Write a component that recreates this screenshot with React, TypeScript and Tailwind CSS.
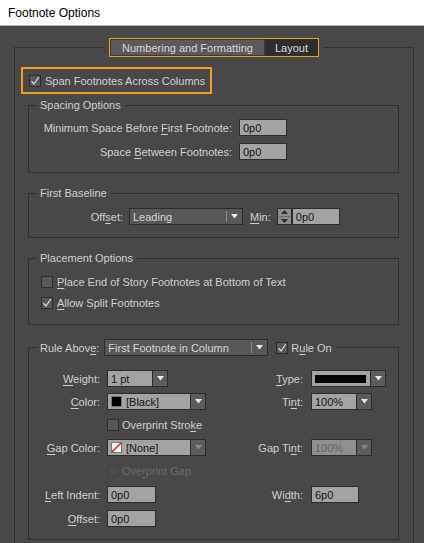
import type { ReactNode } from 'react';

function U({ children }: { children: ReactNode }) {
  return <span className="underline underline-offset-2">{children}</span>;
}

function Check({ checked, disabled }: { checked?: boolean; disabled?: boolean }) {
  return (
    <span
      className={`flex h-[12px] w-[12px] shrink-0 items-center justify-center border ${
        disabled ? 'border-[#404040] bg-[#4a4a4a]' : 'border-[#2c2c2c] bg-[#575757]'
      }`}
    >
      {checked && (
        <svg width="10" height="10" viewBox="0 0 10 10">
          <path d="M1.5 5.2 L4 8 L8.8 1" fill="none" stroke="#d8d8d8" strokeWidth="1.3" />
        </svg>
      )}
    </span>
  );
}

function Arrow({ color = '#e8e8e8' }: { color?: string }) {
  return (
    <svg width="7" height="5" viewBox="0 0 7 5">
      <path d="M0 0 H7 L3.5 4.5 Z" fill={color} />
    </svg>
  );
}

function Input({ value, width }: { value: string; width: string }) {
  return (
    <div className={`${width} flex h-[17px] items-center border border-[#2b2b2b] bg-[#a3a3a3] pl-[3px] text-[#151515]`}>
      {value}
    </div>
  );
}

function Combo({
  width,
  children,
  disabled,
  arrowDisabled,
}: {
  width: string;
  children: ReactNode;
  disabled?: boolean;
  arrowDisabled?: boolean;
}) {
  return (
    <div className={`${width} flex h-[17px] border border-[#2b2b2b]`}>
      <div
        className={`flex flex-1 items-center gap-[4px] pl-[3px] ${
          disabled ? 'bg-[#8f8f8f] text-[#646464]' : 'bg-[#a3a3a3] text-[#151515]'
        }`}
      >
        {children}
      </div>
      <div className="flex w-[15px] items-center justify-center border-l border-[#2b2b2b] bg-[#5c5c5c]">
        <Arrow color={disabled || arrowDisabled ? '#8a8a8a' : '#e8e8e8'} />
      </div>
    </div>
  );
}

function Select({ width, children }: { width: string; children: ReactNode }) {
  return (
    <div className={`${width} flex h-[17px] items-center border border-[#2b2b2b] bg-[#585858] text-[#d6d6d6]`}>
      <div className="flex-1 pl-[3px]">{children}</div>
      <div className="h-[11px] w-px bg-[#8a8a8a]" />
      <div className="flex w-[15px] items-center justify-center">
        <Arrow />
      </div>
    </div>
  );
}

function Row({
  label,
  control,
  rightLabel,
  rightControl,
  className = '',
}: {
  label?: ReactNode;
  control?: ReactNode;
  rightLabel?: ReactNode;
  rightControl?: ReactNode;
  className?: string;
}) {
  return (
    <div className={`flex h-[17px] items-center ${className}`}>
      <div className="w-[71px] text-right">{label}</div>
      <div className="ml-[7px] w-[123px]">{control}</div>
      <div className="w-[73px] text-right">{rightLabel}</div>
      <div className="ml-[8px]">{rightControl}</div>
    </div>
  );
}

export default function App() {
  return (
    <div className="h-[543px] w-[424px] overflow-hidden bg-[#484848] font-['Liberation_Sans',Arial,sans-serif] text-[11px] leading-[14px] text-[#d0d0d0]">
      <div className="flex h-[26px] items-center border-b border-[#b4b4b4] bg-white pl-[8px] text-[12px] text-black">
        Footnote Options
      </div>

      <div className="pl-[14px] pr-[10px] pt-[12px]">
        <fieldset className="h-[560px] border border-[#323232]">
          <legend className="mx-auto px-[4px]">
            <div className="flex h-[19px] border border-[#f39c1f]">
              <div className="flex items-center border border-[#3a3a3a] bg-[#5a5a5a] px-[11px] text-[#d8d8d8]">
                Numbering and Formatting
              </div>
              <div className="flex items-center bg-[#2d2d2d] px-[10px] text-[#dcdcdc]">Layout</div>
            </div>
          </legend>

          <div className="pl-[6px]">
            <div className="mt-[10px] flex h-[27px] w-[191px] items-center border-2 border-[#f39c1f] pl-[6px]">
              <Check checked />
              <span className="ml-[4px]">Span Footnotes Across Columns</span>
            </div>

            <fieldset className="ml-[7px] mt-[4px] w-[371px] border border-[#2e2e2e]">
              <legend className="ml-[7px] px-[4px]">Spacing Options</legend>
              <div className="flex flex-col gap-[7px] pb-[12px] pt-[7px]">
                <div className="flex items-center">
                  <div className="w-[203px] text-right">
                    Minimum Space Before <U>F</U>irst Footnote:
                  </div>
                  <div className="ml-[7px]">
                    <Input value="0p0" width="w-[48px]" />
                  </div>
                </div>
                <div className="flex items-center">
                  <div className="w-[203px] text-right">
                    Space <U>B</U>etween Footnotes:
                  </div>
                  <div className="ml-[7px]">
                    <Input value="0p0" width="w-[48px]" />
                  </div>
                </div>
              </div>
            </fieldset>

            <fieldset className="ml-[7px] mt-[13px] w-[371px] border border-[#2e2e2e]">
              <legend className="ml-[7px] px-[4px]">First Baseline</legend>
              <div className="flex items-center pb-[12px] pt-[8px]">
                <div className="w-[94px] text-right">
                  Off<U>s</U>et:
                </div>
                <div className="ml-[6px]">
                  <Select width="w-[114px]">Leading</Select>
                </div>
                <div className="ml-[7px]">
                  <U>M</U>in:
                </div>
                <div className="ml-[6px] flex h-[17px] w-[15px] flex-col items-center justify-center gap-[2px] border border-[#2b2b2b] bg-[#8e8e8e]">
                  <svg width="7" height="4" viewBox="0 0 7 4">
                    <path d="M0 4 H7 L3.5 0 Z" fill="#2a2a2a" />
                  </svg>
                  <div className="h-px w-[11px] bg-[#6a6a6a]" />
                  <svg width="7" height="4" viewBox="0 0 7 4">
                    <path d="M0 0 H7 L3.5 4 Z" fill="#2a2a2a" />
                  </svg>
                </div>
                <Input value="0p0" width="w-[48px]" />
              </div>
            </fieldset>

            <fieldset className="ml-[7px] mt-[13px] w-[371px] border border-[#2e2e2e]">
              <legend className="ml-[7px] px-[4px]">Placement Options</legend>
              <div className="flex flex-col gap-[5px] pb-[13px] pl-[12px] pt-[9px]">
                <div className="flex h-[16px] items-center">
                  <Check />
                  <span className="ml-[4px]">
                    <U>P</U>lace End of Story Footnotes at Bottom of Text
                  </span>
                </div>
                <div className="flex h-[16px] items-center">
                  <Check checked />
                  <span className="ml-[4px]">
                    <U>A</U>llow Split Footnotes
                  </span>
                </div>
              </div>
            </fieldset>

            <fieldset className="ml-[7px] mt-[14px] w-[371px] border border-[#2e2e2e]">
              <legend className="ml-[7px] px-[4px]">
                <div className="flex items-center">
                  <span>
                    Rule Abov<U>e</U>:
                  </span>
                  <div className="ml-[5px]">
                    <Select width="w-[164px]">First Footnote in Column</Select>
                  </div>
                  <div className="ml-[8px]">
                    <Check checked />
                  </div>
                  <span className="ml-[3px]">
                    R<U>u</U>le On
                  </span>
                </div>
              </legend>
              <div className="flex flex-col pb-[12px] pt-[14px]">
                <Row
                  label={
                    <>
                      <U>W</U>eight:
                    </>
                  }
                  control={<Combo width="w-[61px]">1 pt</Combo>}
                  rightLabel={
                    <>
                      <U>T</U>ype:
                    </>
                  }
                  rightControl={
                    <Combo width="w-[75px]">
                      <div className="h-[8px] w-[51px] bg-black" />
                    </Combo>
                  }
                />
                <Row
                  className="mt-[6px]"
                  label={
                    <>
                      <U>C</U>olor:
                    </>
                  }
                  control={
                    <Combo width="w-[99px]">
                      <span className="h-[11px] w-[11px] border border-[#777] bg-black" />
                      [Black]
                    </Combo>
                  }
                  rightLabel={
                    <>
                      Ti<U>n</U>t:
                    </>
                  }
                  rightControl={<Combo width="w-[61px]">100%</Combo>}
                />
                <Row
                  className="mt-[6px]"
                  control={
                    <div className="flex items-center">
                      <Check />
                      <span className="ml-[3px]">
                        Overprint Stro<U>k</U>e
                      </span>
                    </div>
                  }
                />
                <Row
                  className="mt-[6px]"
                  label={
                    <>
                      <U>G</U>ap Color:
                    </>
                  }
                  control={
                    <Combo width="w-[99px]" arrowDisabled>
                      <svg width="11" height="11" viewBox="0 0 11 11">
                        <rect x="0.5" y="0.5" width="10" height="10" fill="#fff" stroke="#777" />
                        <path d="M1 10 L10 1" stroke="#e0201c" strokeWidth="1.6" />
                      </svg>
                      [None]
                    </Combo>
                  }
                  rightLabel={
                    <>
                      Gap Ti<U>n</U>t:
                    </>
                  }
                  rightControl={
                    <Combo width="w-[61px]" disabled>
                      100%
                    </Combo>
                  }
                />
                <Row
                  className="mt-[6px] text-[#6a6a6a]"
                  control={
                    <div className="flex items-center">
                      <Check disabled />
                      <span className="ml-[3px]">
                        Ove<U>r</U>print Gap
                      </span>
                    </div>
                  }
                />
                <Row
                  className="mt-[7px]"
                  label={
                    <>
                      <U>L</U>eft Indent:
                    </>
                  }
                  control={<Input value="0p0" width="w-[49px]" />}
                  rightLabel={
                    <>
                      Wi<U>d</U>th:
                    </>
                  }
                  rightControl={<Input value="6p0" width="w-[48px]" />}
                />
                <Row
                  className="mt-[7px]"
                  label={
                    <>
                      <U>O</U>ffset:
                    </>
                  }
                  control={<Input value="0p0" width="w-[49px]" />}
                />
              </div>
            </fieldset>
          </div>
        </fieldset>
      </div>
    </div>
  );
}
